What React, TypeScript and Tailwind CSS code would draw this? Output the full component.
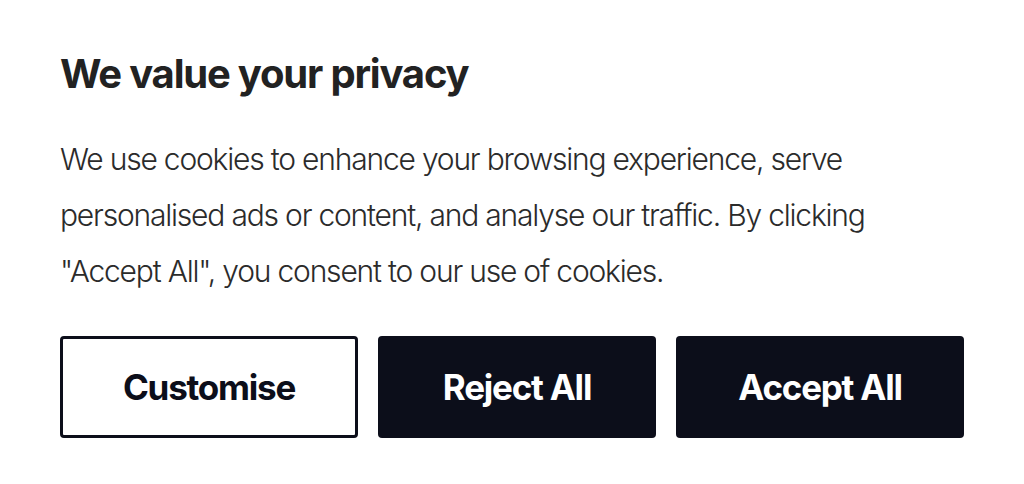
import React from "react";

export default function App() {
  return (
    <div className="w-[1024px] h-[484px] bg-white flex flex-col px-[60px] pt-[50px]" style={{ fontFamily: "Inter, 'Liberation Sans', sans-serif" }}>
      <h1 className="text-[40px] leading-[48px] font-bold tracking-[-0.03em] text-[#222222]">We value your privacy</h1>
      <p className="mt-[33px] text-[30px] leading-[56px] font-light tracking-[-0.04em] text-[#2b2b2b] w-[880px]">
        We use cookies to enhance your browsing experience, serve personalised ads or content, and analyse our traffic. By clicking "Accept All", you consent to our use of cookies.
      </p>
      <div className="mt-[37px] flex gap-[20px] w-[904px]">
        <button className="w-[298px] h-[102px] rounded-[4px] border-[3px] border-[#0c0e1a] bg-white text-[#0c0e1a] text-[35px] font-bold tracking-[-0.035em]">Customise</button>
        <button className="w-[278px] h-[102px] rounded-[4px] bg-[#0c0e1a] text-white text-[35px] font-bold tracking-[-0.035em]">Reject All</button>
        <button className="flex-1 h-[102px] rounded-[4px] bg-[#0c0e1a] text-white text-[35px] font-bold tracking-[-0.035em]">Accept All</button>
      </div>
    </div>
  );
}
